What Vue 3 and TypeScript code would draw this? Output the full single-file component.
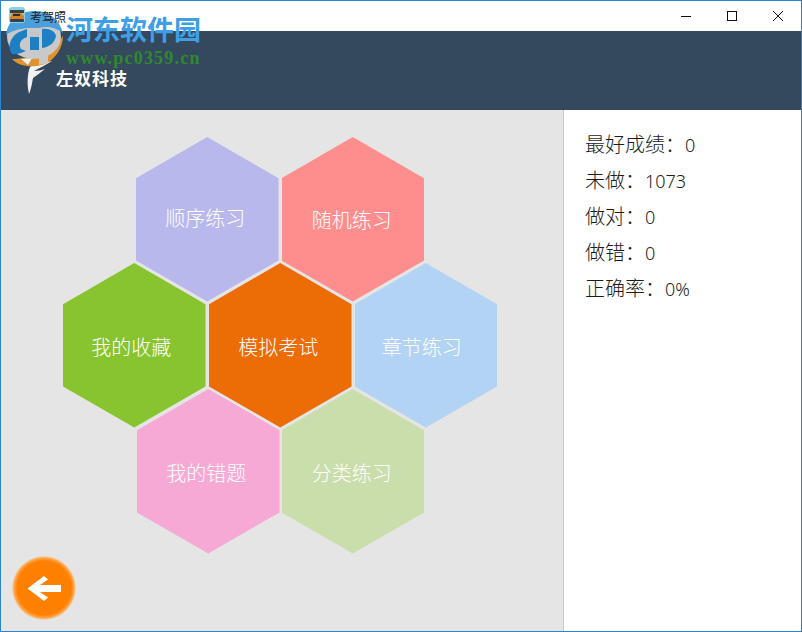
<template>
  <div class="window">
    <div class="title-bar">
      <svg class="app-icon" width="16" height="16" viewBox="0 0 16 16">
        <rect x="0" y="0" width="16" height="16" rx="3" fill="#8fd0dc" />
        <rect x="1" y="3" width="14" height="3" fill="#33424a" />
        <path d="M1 11 L3 6 H12 L15 9 V12 H1 Z" fill="#d9821f" />
        <rect x="4" y="7" width="7" height="2" fill="#2c2c2c" />
        <rect x="1" y="12" width="14" height="3" rx="1" fill="#33424a" />
      </svg>
      <span class="app-title">考驾照</span>
      <div class="win-buttons">
        <svg class="win-btn" width="46" height="30" viewBox="0 0 46 30">
          <path d="M18 15.5 H28" stroke="#111" stroke-width="1" />
        </svg>
        <svg class="win-btn" width="46" height="30" viewBox="0 0 46 30">
          <rect x="18.5" y="10.5" width="9" height="9" fill="none" stroke="#111" stroke-width="1" />
        </svg>
        <svg class="win-btn" width="46" height="30" viewBox="0 0 46 30">
          <path d="M18 10 L28 20 M28 10 L18 20" stroke="#111" stroke-width="1" />
        </svg>
      </div>
    </div>

    <div class="header">
      <span class="brand">左奴科技</span>
    </div>

    <div class="content">
      <div class="board">
        <div
          v-for="hex in hexes"
          :key="hex.label"
          class="hex"
          :style="{ left: hex.x + 'px', top: hex.y + 'px', background: hex.color }"
        >
          <span :style="{ transform: `translate(${hex.dx}px, ${hex.dy}px)` }">{{ hex.label }}</span>
        </div>
        <div class="back-btn">
          <svg width="34" height="25" viewBox="0 0 34 25">
            <path d="M0.5 12.5 L17 0 L21 3.5 L13 9 H34 V16 H13 L21 21.5 L17 25 Z" fill="#fff" />
          </svg>
        </div>
      </div>
      <div class="side">
        <div v-for="row in stats" :key="row.label" class="stat">
          <span>{{ row.label }}：</span><span class="value">{{ row.value }}</span>
        </div>
      </div>
    </div>

    <!-- 水印 -->
    <svg class="wm-logo" width="66" height="94" viewBox="0 0 66 94">
      <path d="M29 66 C34 62 42 61 51 60 C45 64 38 67 33 70 C37 70 41 69 44 68 C39 72 35 75 32 77 C31 83 30 88 28 93 C26 84 26 74 29 66 Z" fill="#f2f2f2" />
      <path d="M11 58 C26 58 50 52 62 35 C62 46 55 58 44 63 C32 67 18 66 11 58 Z" fill="#e0922e" />
      <path d="M20 58 L31 57 L27 64 Z" fill="#f1f1f1" />
      <path d="M38 54 H47 V62 L38 64 Z" fill="#c9c9c9" />
      <ellipse cx="33" cy="36" rx="27" ry="22" fill="#c9c9c9" />
      <path d="M11 53 C6 46 9 36 18 31 L26 28 V36 C20 38 17 43 20 48 L25 50 C20 52 15 54 11 53 Z" fill="#1f7fc4" />
      <path d="M29 31 H38 V49 H29 Z" fill="#c2c6ca" />
      <path d="M29 36 H38 V49 H29 Z" fill="#1f7fc4" />
      <path d="M41 28 C48 27 54 30 55 35 C54 41 49 46 41 47 Z" fill="#1f7fc4" />
      <path d="M5 34 C7 18 20 10 34 10 C48 10 58 18 62 32 C54 26 46 25 38 27 L26 27 C18 28 10 30 5 34 Z" fill="#4a9fdc" />
    </svg>
    <div class="wm-text">
      <div class="wm-cn">河东软件园</div>
      <div class="wm-url">www.pc0359.cn</div>
    </div>
  </div>
</template>

<script setup lang="ts">
interface Hex {
  label: string
  x: number
  y: number
  color: string
  dx: number
  dy: number
}

const hexes: Hex[] = [
  { label: '顺序练习', x: 135, y: 27, color: '#b8b8ec', dx: -2, dy: -2 },
  { label: '随机练习', x: 280.5, y: 27, color: '#fe8e8e', dx: -1, dy: 0 },
  { label: '我的收藏', x: 62, y: 153, color: '#88c42f', dx: -3, dy: 1 },
  { label: '模拟考试', x: 208, y: 153, color: '#ec6c05', dx: -2, dy: 1 },
  { label: '章节练习', x: 353.5, y: 153, color: '#b2d3f3', dx: -4, dy: 1 },
  { label: '我的错题', x: 136, y: 279, color: '#f7a9d6', dx: -2, dy: 1 },
  { label: '分类练习', x: 280.5, y: 279, color: '#cadeab', dx: -1, dy: 1 }
]

const stats = [
  { label: '最好成绩', value: '0' },
  { label: '未做', value: '1073' },
  { label: '做对', value: '0' },
  { label: '做错', value: '0' },
  { label: '正确率', value: '0%' }
]
</script>

<style>
html,
body {
  margin: 0;
  padding: 0;
}
</style>

<style scoped>
.window {
  position: relative;
  width: 802px;
  height: 632px;
  box-sizing: border-box;
  display: flex;
  flex-direction: column;
  border: 1px solid #2b85cf;
  overflow: hidden;
  background: #fff;
  font-family: "Noto Sans CJK SC", "Liberation Sans", sans-serif;
}

.title-bar {
  height: 30px;
  display: flex;
  align-items: center;
  background: #fff;
  flex-shrink: 0;
}

.app-icon,
.app-title {
  position: relative;
  z-index: 2;
}

.app-icon {
  margin: 0 0 2px 8px;
}

.app-title {
  margin-left: 5px;
  font-size: 12px;
  color: #222;
}

.win-buttons {
  margin-left: auto;
  display: flex;
}

.win-btn {
  display: block;
}

.header {
  height: 79px;
  flex-shrink: 0;
  background: #34495e;
  display: flex;
  align-items: flex-end;
}

.brand {
  margin: 0 0 22px 55px;
  font-size: 17px;
  line-height: 20px;
  font-weight: 700;
  letter-spacing: 1px;
  color: #fff;
}

.content {
  flex: 1;
  display: flex;
  min-height: 0;
}

.board {
  position: relative;
  width: 562px;
  background: #e5e5e5;
  border-right: 1px solid #c9c9c9;
}

.hex {
  position: absolute;
  width: 142.5px;
  height: 164.5px;
  clip-path: polygon(50% 0, 100% 25%, 100% 75%, 50% 100%, 0 75%, 0 25%);
  display: flex;
  align-items: center;
  justify-content: center;
  color: #fff;
  font-size: 20px;
  font-weight: 300;
}

.back-btn {
  position: absolute;
  left: 11px;
  bottom: 11px;
  width: 64px;
  height: 64px;
  border-radius: 50%;
  display: flex;
  align-items: center;
  justify-content: center;
  background: radial-gradient(circle closest-side, #ff8000 0, #ff8000 84%, #ffa64d 94%, rgba(255, 200, 150, 0.3) 100%);
}

.side {
  flex: 1;
  padding: 16px 0 0 22px;
  background: #fff;
}

.stat {
  height: 36px;
  line-height: 36px;
  font-size: 20px;
  font-weight: 300;
  color: #1c1c1c;
  margin-left: -1px;
}

.value {
  font-family: "Noto Sans", "Liberation Sans", sans-serif;
  font-size: 18px;
}

.wm-logo {
  position: absolute;
  left: 0;
  top: 0;
}

.wm-text {
  position: absolute;
  left: 65px;
  top: 11px;
  font-family: "Liberation Serif", "Noto Sans CJK SC", serif;
  font-weight: 700;
}

.wm-cn {
  font-family: "Noto Sans CJK SC", serif;
  font-size: 27px;
  line-height: 34px;
  color: #3f9fe6;
}

.wm-url {
  margin-top: 2px;
  font-size: 18px;
  line-height: 20px;
  letter-spacing: 1.2px;
  color: #2f8a2f;
}
</style>
